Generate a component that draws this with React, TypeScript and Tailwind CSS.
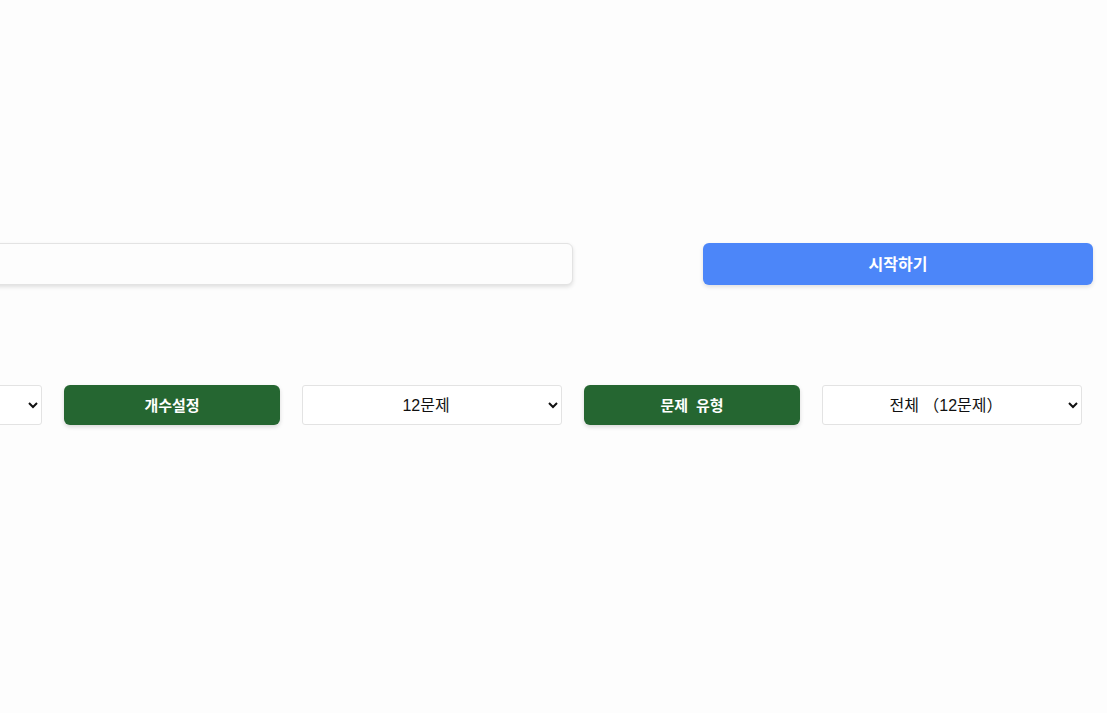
import { useState } from "react";

const font = "font-['Noto_Sans','Noto_Sans_CJK_KR',sans-serif]";
const selectCls =
  "h-[40px] w-[260px] shrink-0 rounded-[3px] border border-[#e3e3e3] bg-white px-2 text-center font-['Liberation_Sans','Noto_Sans_CJK_KR',sans-serif] text-[16px] text-[#111]";

export default function App() {
  const [count, setCount] = useState("12");
  const [kind, setKind] = useState("all");
  const [level, setLevel] = useState("1");

  return (
    <main className={`min-h-[713px] w-full overflow-hidden bg-[#fdfdfd] ${font}`}>
      <div className="flex flex-col gap-[100px] pt-[243px]">
        <div className="flex justify-end gap-[130px] pr-[14px]">
          <input className="h-[42px] w-[760px] shrink-0 rounded-md border border-[#e3e3e3] bg-[#fdfdfd] px-3 text-[15px] shadow-[0_2px_4px_rgba(0,0,0,0.12)] outline-none" />
          <button className="h-[42px] w-[390px] shrink-0 rounded-md bg-[#4c86f9] text-[16px] font-bold text-white shadow-[0_2px_4px_rgba(0,0,0,0.12)]">
            시작하기
          </button>
        </div>
        <div className="flex justify-end gap-[22px] pr-[25px]">
          <select className={selectCls} value={level} onChange={(e) => setLevel(e.target.value)}>
            <option value="1">1단계</option>
          </select>
          <button className="h-[40px] w-[216px] shrink-0 rounded-md bg-[#256631] text-[15px] font-bold text-white shadow-[0_2px_4px_rgba(0,0,0,0.15)]">
            개수설정
          </button>
          <select className={selectCls} value={count} onChange={(e) => setCount(e.target.value)}>
            <option value="12">12문제</option>
            <option value="24">24문제</option>
          </select>
          <button className="h-[40px] w-[216px] shrink-0 whitespace-pre rounded-md bg-[#256631] text-[15px] font-bold text-white shadow-[0_2px_4px_rgba(0,0,0,0.15)]">
            {"문제  유형"}
          </button>
          <select className={selectCls} value={kind} onChange={(e) => setKind(e.target.value)}>
            <option value="all">전체 （12문제）</option>
          </select>
        </div>
      </div>
    </main>
  );
}
